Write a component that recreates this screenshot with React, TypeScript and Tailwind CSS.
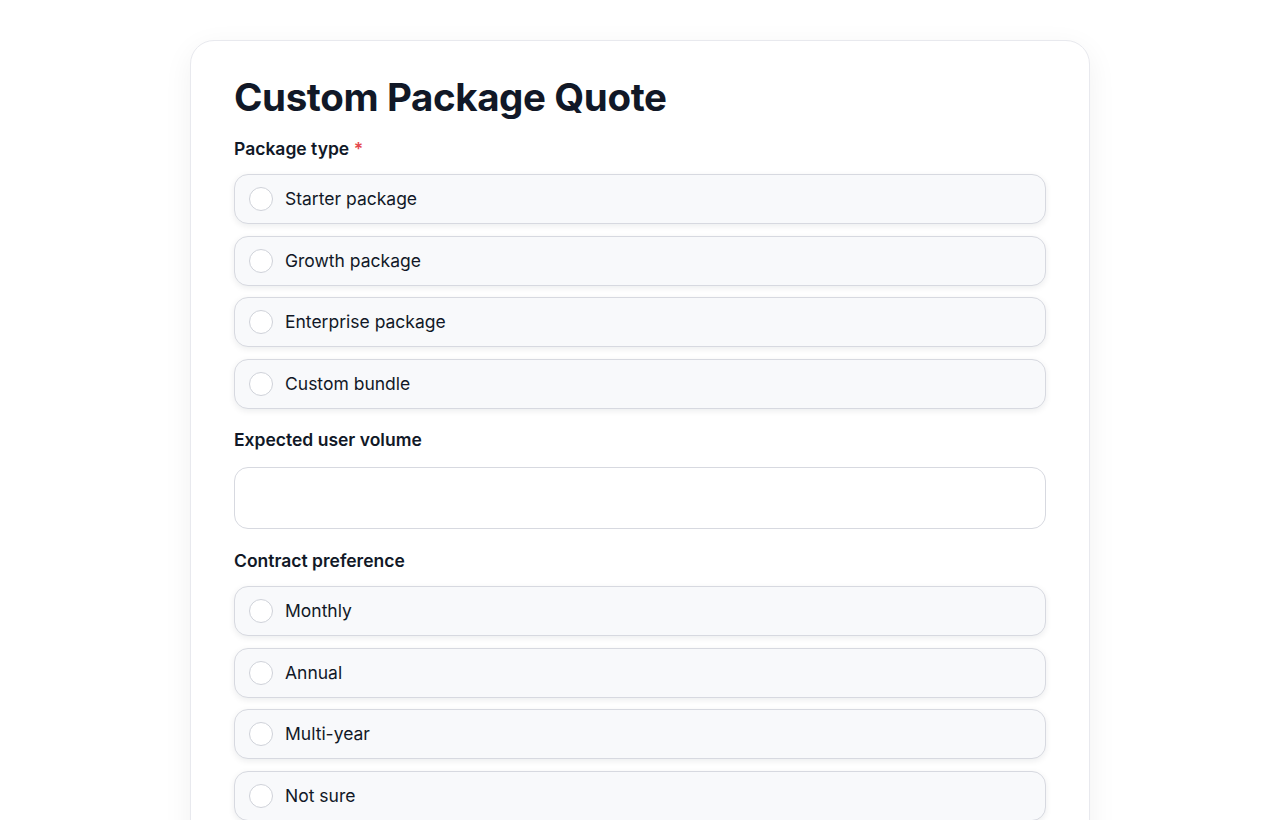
const packageOptions = ["Starter package", "Growth package", "Enterprise package", "Custom bundle"];
const contractOptions = ["Monthly", "Annual", "Multi-year", "Not sure"];

function RadioRow({ label, name }: { label: string; name: string }) {
  return (
    <label className="flex h-[50px] items-center gap-[12px] rounded-[14px] border border-[#d7d9e0] bg-[#f8f9fb] px-[14px] shadow-[0_2px_6px_rgba(17,24,39,0.08)] cursor-pointer">
      <input type="radio" name={name} className="peer sr-only" />
      <span className="h-[24px] w-[24px] rounded-full border border-[#cfd2d9] bg-white" />
      <span className="text-[17.5px] text-[#111827]">{label}</span>
    </label>
  );
}

export default function App() {
  return (
    <div className="min-h-screen bg-white pt-[40px] pb-10" style={{ fontFamily: "Inter, 'Noto Sans', sans-serif" }}>
      <div className="mx-auto w-[900px] rounded-[24px] border border-[#e8e9ee] bg-white px-[43px] pt-[28px] pb-10 shadow-[0_8px_30px_rgba(17,24,39,0.06)]">
        <h1 className="text-[38.5px] font-bold leading-[56px] tracking-[-0.01em] text-[#111827]">Custom Package Quote</h1>

        <div className="mt-[11px] text-[17.5px] font-semibold text-[#111827]">
          Package type <span className="text-[#e5484d]">*</span>
        </div>
        <div className="mt-[12px] flex flex-col gap-[11.5px]">
          {packageOptions.map((o) => (
            <RadioRow key={o} label={o} name="package" />
          ))}
        </div>

        <div className="mt-[18px] text-[17.5px] font-semibold text-[#111827]">Expected user volume</div>
        <input
          type="text"
          className="mt-[14px] block h-[62px] w-full rounded-[14px] border border-[#d7d9e0] bg-white px-4 text-[17px] outline-none"
        />

        <div className="mt-[19px] text-[17.5px] font-semibold text-[#111827]">Contract preference</div>
        <div className="mt-[12px] flex flex-col gap-[11.5px]">
          {contractOptions.map((o) => (
            <RadioRow key={o} label={o} name="contract" />
          ))}
        </div>
      </div>
    </div>
  );
}
